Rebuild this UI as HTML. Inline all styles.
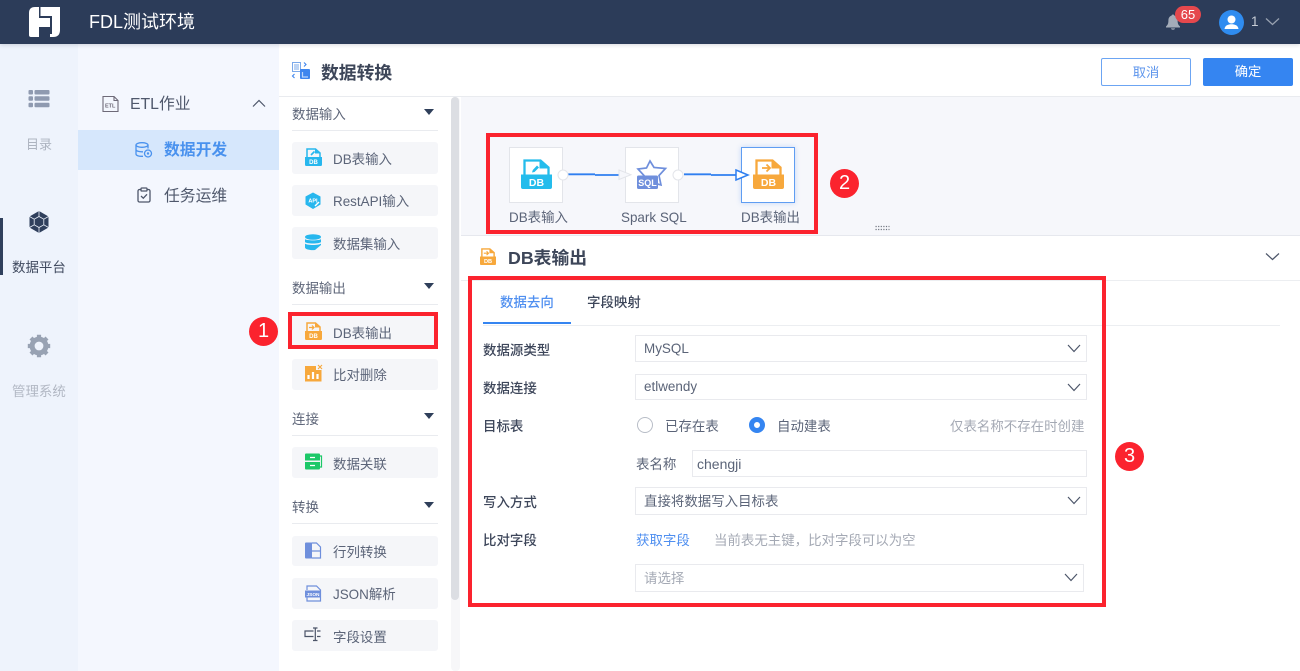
<!DOCTYPE html>
<html lang="zh-CN"><head><meta charset="utf-8"><title>FDL</title>
<style>
html,body{margin:0;padding:0;width:1300px;height:671px;overflow:hidden;background:#fff}
body{position:relative;font-family:"Liberation Sans","Noto Sans CJK SC",sans-serif;color:#4a5369;filter:blur(.3px)}
.a{position:absolute}
.t{position:absolute;white-space:nowrap;line-height:20px;font-size:13.45px}
.card{position:absolute;left:292px;width:146px;background:#f5f6f9;border-radius:3px}
.sec{position:absolute;left:292px;width:146px;height:1px;background:#e9ebef}
.tri{position:absolute;left:424px;width:0;height:0;border-left:5px solid transparent;border-right:5px solid transparent;border-top:6px solid #2f3f5a}
.sel{position:absolute;box-sizing:border-box;background:#fff;border:1px solid #e9eaee}
.red{position:absolute;box-sizing:border-box;border:4px solid #fb232e}
.num{position:absolute;width:29px;height:29px;border-radius:50%;background:#fb232e;color:#fff;text-align:center;line-height:29px;font-size:20px}
.node{position:absolute;top:147px;width:54px;height:56px;box-sizing:border-box;background:#fff;border:1px solid #e3e5ea}
svg{position:absolute;overflow:visible}
.lb{font-weight:500;color:#3d465a}
</style></head><body>

<!-- backgrounds -->
<div class="a" style="left:0;top:44px;width:78px;height:627px;background:#eef3fc"></div>
<div class="a" style="left:78px;top:44px;width:201px;height:627px;background:#f4f7fe"></div>
<div class="a" style="left:0;top:0;width:1300px;height:44px;background:#2c3c59;box-shadow:0 1px 4px rgba(40,50,70,.18)"></div>
<div class="a" style="left:78px;top:130px;width:201px;height:40px;background:#d6e7fc"></div>
<div class="a" style="left:279px;top:96px;width:1021px;height:1px;background:#e9ebef"></div>
<div class="a" style="left:461px;top:97px;width:839px;height:138px;background:#f6f7fb"></div>
<div class="a" style="left:461px;top:235px;width:839px;height:1px;background:#e6e8ee"></div>
<div class="a" style="left:451px;top:97px;width:9px;height:574px;background:#f7f7f9;border-radius:4px"></div>
<div class="a" style="left:451px;top:97px;width:8px;height:503px;background:#dcdee3;border-radius:4px"></div>

<!-- header -->
<svg style="left:29px;top:7px" width="31" height="30" viewBox="0 0 31 30"><path fill="#fff" d="M6 0H31V23Q31 30 24 30H2Q0 30 0 28V6Q0 0 6 0Z"/><g fill="#2c3c59"><rect x="10" y="0" width="1.500" height="10"/><rect x="10" y="9" width="13" height="2"/><rect x="21" y="9" width="2" height="18"/><rect x="10" y="20" width="11" height="10"/></g></svg>
<div class="t" style="left:89px;top:12px;font-size:18px;color:#fff">FDL测试环境</div>
<svg style="left:1165px;top:14px" width="16" height="16" viewBox="0 0 16 16"><path fill="#a4acb9" d="M8 0.500C9 0.500 9.300 1 9.300 1.500C11.500 2.200 12.600 4 12.600 6.500C12.600 9.500 13.300 11 15 12.500V13.500H1V12.500C2.700 11 3.400 9.500 3.400 6.500C3.400 4 4.500 2.200 6.700 1.500C6.700 1 7 0.500 8 0.500ZM6 14.400H10C10 15.300 9 15.800 8 15.800S6 15.300 6 14.400Z"/></svg>
<div class="a" style="left:1175px;top:6px;width:26px;height:17px;background:#e5484d;border-radius:9px;color:#fff;font-size:13px;line-height:17px;text-align:center">65</div>
<div class="a" style="left:1219px;top:10px;width:25px;height:25px;border-radius:50%;background:#2f8cf0"></div>
<svg style="left:1219px;top:10px" width="25" height="25" viewBox="0 0 25 25"><circle cx="12.500" cy="9.500" r="4" fill="#fff"/><path fill="#fff" d="M5.500 19C6 15.500 9 14.300 12.500 14.300S19 15.500 19.500 19Z"/></svg>
<div class="t" style="left:1251px;top:12px;font-size:13.5px;color:#c8cdd6">1</div>
<svg style="left:1265px;top:17px" width="15" height="9" viewBox="0 0 15 9"><path fill="none" stroke="#98a1b0" stroke-width="1.300" d="M1 1.500 7.500 7.500 14 1.500"/></svg>

<!-- left rail -->
<svg style="left:28px;top:89px" width="22" height="19" viewBox="0 0 22 19"><g fill="#8f9ab0"><rect x="0.500" y="1" width="4.500" height="4.500" rx="1"/><rect x="0.500" y="7.300" width="4.500" height="4.500" rx="1"/><rect x="0.500" y="13.800" width="4.500" height="4.500" rx="1"/><rect x="6.500" y="1" width="15" height="4.500" rx="1"/><rect x="6.500" y="7.300" width="15" height="4.500" rx="1"/><rect x="6.500" y="13.800" width="15" height="4.500" rx="1"/></g></svg>
<div class="t" style="left:26px;top:135px;font-size:13px;color:#adb4c0">目录</div>
<div class="a" style="left:0;top:218px;width:3px;height:57px;background:#2f3f5c"></div>
<svg style="left:29px;top:211px" width="20" height="22" viewBox="0 0 20 22"><path fill="#2f3f5c" d="M10 0 19.500 5.500V16.500L10 22 .5 16.500V5.500Z"/><g fill="none" stroke="#eef3fc" stroke-width=".8"><path d="M10 5.500 14.800 8.200V13.800L10 16.500 5.200 13.800V8.200Z"/><path d="M10 0V5.500M19.500 5.500 14.800 8.200M19.500 16.500 14.800 13.800M10 22V16.500M.5 16.500 5.200 13.800M.5 5.500 5.200 8.200"/></g></svg>
<div class="t" style="left:12px;top:258px;color:#414b60">数据平台</div>
<svg style="left:27px;top:334px" width="24" height="24" viewBox="0 0 24 24"><circle cx="12" cy="12" r="6.900" fill="none" stroke="#98a2b3" stroke-width="5"/><g stroke="#98a2b3" stroke-width="4.200"><path d="M12 .8V4M12 20V23.200M.8 12H4M20 12H23.200M4 4 6.300 6.300M17.700 17.700 20 20M4 20 6.300 17.700M17.700 6.300 20 4"/></g></svg>
<div class="t" style="left:12px;top:382px;color:#b2b8c4">管理系统</div>

<!-- second menu -->
<svg style="left:102px;top:96px" width="17" height="16" viewBox="0 0 17 16"><path fill="none" stroke="#6e6a78" stroke-width="1.100" d="M1 .5H12L16 4.500V15.500H1ZM12 .5V4.500H16"/><text x="3" y="11.500" font-size="5.500" fill="#6e6a78" font-family="Liberation Sans" font-weight="700">ETL</text></svg>
<div class="t" style="left:130px;top:95px;font-size:15.8px;color:#4f586c">ETL作业</div>
<svg style="left:252px;top:99px" width="14" height="9" viewBox="0 0 14 9"><path fill="none" stroke="#4d566a" stroke-width="1.200" d="M1 7.500 7 1.500 13 7.500"/></svg>
<svg style="left:135px;top:142px" width="18" height="16" viewBox="0 0 18 16"><g fill="none" stroke="#4a92ee" stroke-width="1.300"><ellipse cx="7" cy="3" rx="6" ry="2.300"/><path d="M1 3V12C1 13.600 4 14.500 8 14.300M1 7.500C1 9 4 10 8 9.800M13 3V6.500"/><circle cx="13" cy="11.500" r="3.500"/></g><circle cx="13" cy="11.500" r="1.200" fill="#4a92ee"/></svg>
<div class="t" style="left:164px;top:141px;font-size:15.8px;font-weight:700;color:#4a92ee">数据开发</div>
<svg style="left:137px;top:187px" width="14" height="16" viewBox="0 0 14 16"><g fill="none" stroke="#4d566a" stroke-width="1.300"><rect x="1" y="2.500" width="12" height="12.500" rx="1.500"/><rect x="4" y="1" width="6" height="3" rx=".8" fill="#f4f7fe"/><path d="M4 9 6.300 11.200 10 7.300"/></g></svg>
<div class="t" style="left:164px;top:187px;font-size:15.8px;color:#4f586c">任务运维</div>

<!-- top bar -->
<svg style="left:292px;top:62px" width="18" height="18" viewBox="0 0 18 18"><rect x="0.500" y="0.500" width="8" height="9" fill="none" stroke="#7ba9ea" stroke-width="1"/><path d="M2 3H7M2 5H7M2 7H7" stroke="#7ba9ea" stroke-width=".9"/><rect x="8" y="7" width="10" height="10" rx="1" fill="#3f86ee"/><path d="M10.500 10V15H16" fill="none" stroke="#bcd6fa" stroke-width="1.200"/><path d="M12 0.500 14 2.500 12 4.500M2.500 12 .5 14 2.500 16" fill="none" stroke="#3f86ee" stroke-width="1.100"/></svg>
<div class="t" style="left:321px;top:63px;font-size:17.8px;font-weight:700;color:#3d4659">数据转换</div>
<div class="a" style="left:1101px;top:58px;width:90px;height:28px;box-sizing:border-box;border:1px solid #6ca5f3;border-radius:2px;background:#fff;color:#5d95ec;font-size:13.3px;line-height:27px;text-align:center">取消</div>
<div class="a" style="left:1203px;top:58px;width:90px;height:28px;border-radius:2px;background:#3585f1;color:#fff;font-size:13.3px;line-height:28px;text-align:center">确定</div>

<!-- palette -->
<div class="t" style="left:292px;top:105px;color:#5d6578">数据输入</div><div class="tri" style="top:109px"></div><div class="sec" style="top:130px"></div>
<div class="t" style="left:292px;top:279px;color:#5d6578">数据输出</div><div class="tri" style="top:283px"></div><div class="sec" style="top:304px"></div>
<div class="t" style="left:292px;top:410px;color:#5d6578">连接</div><div class="tri" style="top:413px"></div><div class="sec" style="top:435px"></div>
<div class="t" style="left:292px;top:498px;color:#5d6578">转换</div><div class="tri" style="top:502px"></div><div class="sec" style="top:523px"></div>

<div class="card" style="top:142px;height:32px"></div>
<div class="card" style="top:185px;height:31px"></div>
<div class="card" style="top:227px;height:32px"></div>
<div class="card" style="top:315px;height:31px"></div>
<div class="card" style="top:359px;height:31px"></div>
<div class="card" style="top:447px;height:31px"></div>
<div class="card" style="top:536px;height:30px"></div>
<div class="card" style="top:578px;height:31px"></div>
<div class="card" style="top:620px;height:31px"></div>

<svg style="left:305px;top:148px" width="17" height="18" viewBox="0 0 17 18"><path fill="none" stroke="#27b7ee" stroke-width="1.500" d="M2 9V1H10.500L15 5V9"/><path fill="#27b7ee" d="M10 1 15 5.500H10ZM0 9H17V16.800Q17 18 16 18H1Q0 18 0 16.800Z"/><path d="M6 7 9.500 3.500" stroke="#27b7ee" stroke-width="1.600"/><text x="8.500" y="16" text-anchor="middle" font-size="6" font-weight="700" fill="#fff" font-family="Liberation Sans">DB</text></svg>
<div class="t" style="left:333px;top:150px;color:#5b6478">DB表输入</div>
<svg style="left:305px;top:192px" width="17" height="18" viewBox="0 0 17 18"><path fill="#27b7ee" d="M8 0.500 15.500 4.500V12.500L8 17 .5 12.500V4.500Z"/><text x="8" y="10.500" text-anchor="middle" font-size="5.500" font-weight="700" fill="#fff" font-family="Liberation Sans">API</text><path d="M10 14 14 10" stroke="#fff" stroke-width="1.400"/></svg>
<div class="t" style="left:333px;top:192px;color:#5b6478">RestAPI输入</div>
<svg style="left:304px;top:234px" width="18" height="18" viewBox="0 0 18 18"><g fill="#27b7ee"><ellipse cx="9" cy="3" rx="8" ry="2.800"/><path d="M1 5C2 6.800 16 6.800 17 5V8C16 10 2 10 1 8Z"/><path d="M1 9.500C2 11.500 16 11.500 17 9.500V11L11 16C6 16.500 1 15.300 1 13.500Z"/></g></svg>
<div class="t" style="left:333px;top:235px;color:#5b6478">数据集输入</div>
<svg style="left:305px;top:322px" width="17" height="18" viewBox="0 0 17 18"><path fill="none" stroke="#f7a83c" stroke-width="1.500" d="M2 9V1H10.500L15 5V9"/><path fill="#f7a83c" d="M10 1 15 5.500H10ZM0 9H17V16.800Q17 18 16 18H1Q0 18 0 16.800Z"/><path fill="none" stroke="#f7a83c" stroke-width="1.200" d="M4 5.500H9M7 3.500 9 5.500 7 7.500"/><text x="8.500" y="16" text-anchor="middle" font-size="6" font-weight="700" fill="#fff" font-family="Liberation Sans">DB</text></svg>
<div class="t" style="left:333px;top:324px;color:#5b6478">DB表输出</div>
<svg style="left:305px;top:364px" width="18" height="18" viewBox="0 0 18 18"><path fill="#f7a83c" d="M0 2H11V6H16.500V17.500H0Z"/><path d="M3.500 15V11M8 15V8M12.500 15V10" stroke="#fff" stroke-width="2.200"/><path d="M13 1 17 5M17 1 13 5" stroke="#f7a83c" stroke-width="1.100"/></svg>
<div class="t" style="left:333px;top:366px;color:#5b6478">比对删除</div>
<svg style="left:305px;top:453px" width="17" height="17" viewBox="0 0 17 17"><path fill="#1cc868" d="M1 0.500H14Q15 0.500 15 1.500V7.500H0V1.500Q0 .5 1 .5ZM0 9H15V15Q15 16.500 14 16.500H1Q0 16.500 0 15.500Z"/><path stroke="#fff" stroke-width="1.200" d="M5 4.500H10M5 12.500H10"/><path fill="none" stroke="#1cc868" stroke-width="1.200" d="M15 3H16.500V14H15"/></svg>
<div class="t" style="left:333px;top:455px;color:#5b6478">数据关联</div>
<svg style="left:305px;top:542px" width="17" height="17" viewBox="0 0 17 17"><path fill="#6f8fdc" d="M1 0.500H7V16.500H1Q0 16.500 0 15.500V1.500Q0 .5 1 .5Z"/><path fill="none" stroke="#6f8fdc" stroke-width="1.200" d="M7 1H11.500L15.500 5V16H7M7 9H15.500"/></svg>
<div class="t" style="left:333px;top:543px;color:#5b6478">行列转换</div>
<svg style="left:305px;top:585px" width="17" height="17" viewBox="0 0 17 17"><path fill="none" stroke="#6f8fdc" stroke-width="1.200" d="M2 5V1H11.500L15.500 5V16H2V12"/><rect x="0" y="5.500" width="16" height="7" fill="#6f8fdc"/><text x="8" y="11" text-anchor="middle" font-size="4.800" font-weight="700" fill="#fff" font-family="Liberation Sans">JSON</text></svg>
<div class="t" style="left:333px;top:585px;color:#5b6478">JSON解析</div>
<svg style="left:304px;top:627px" width="18" height="16" viewBox="0 0 18 16"><g fill="none" stroke="#4b5468" stroke-width="1.200"><path d="M9.500 4H1V9.500H9.500M13 4H16.500M13 9.500H16.500"/><path d="M11.300 1V13.500M9 1H13.500M9 13.500H13.500"/></g></svg>
<div class="t" style="left:333px;top:628px;color:#5b6478">字段设置</div>

<!-- canvas nodes -->
<div class="node" style="left:509px"></div>
<div class="node" style="left:625px"></div>
<div class="node" style="left:741px;border:1px solid #5f9df2;box-shadow:0 0 5px rgba(80,140,240,.3)"></div>
<svg style="left:521px;top:159px" width="31" height="30" viewBox="0 0 31 30"><path fill="none" stroke="#24bcec" stroke-width="2.300" d="M3.500 16V1.500H19.500L27.500 8.500V16"/><path fill="#24bcec" d="M18.500 1 27.500 8.500V9.500H18.500ZM0 15.500H31V28Q31 30 29 30H2Q0 30 0 28Z"/><path d="M11 13.500 11.800 11 16 6.500 18 8.500 13.500 13Z" fill="#24bcec"/><text x="15.500" y="27" text-anchor="middle" font-size="10.500" font-weight="700" fill="#fff" font-family="Liberation Sans">DB</text></svg>
<svg style="left:637px;top:160px" width="30" height="29" viewBox="0 0 30 29"><path fill="none" stroke="#6f8fdc" stroke-width="1.700" d="M13 1 17 7.500 28.500 8.500 22 15.500 24 25 13 22 6 24 7 15.500 1 9 9.500 8Z"/><rect x="0" y="15.500" width="21" height="13.500" rx="1.500" fill="#6f8fdc"/><text x="10.500" y="25.800" text-anchor="middle" font-size="9" font-weight="700" fill="#fff" font-family="Liberation Sans">SQL</text></svg>
<svg style="left:753px;top:159px" width="31" height="30" viewBox="0 0 31 30"><path fill="none" stroke="#f7a83c" stroke-width="2.300" d="M3.500 16V1.500H19.500L27.500 8.500V16"/><path fill="#f7a83c" d="M18.500 1 27.500 8.500V9.500H18.500ZM0 15.500H31V28Q31 30 29 30H2Q0 30 0 28Z"/><path fill="none" stroke="#f7a83c" stroke-width="1.800" d="M9 9H16.500M13.500 5.500 17 9 13.500 12.500"/><text x="15.500" y="27" text-anchor="middle" font-size="10.500" font-weight="700" fill="#fff" font-family="Liberation Sans">DB</text></svg>
<svg style="left:555px;top:165px" width="200" height="20" viewBox="0 0 200 20"><path fill="none" stroke="#2f7ff0" stroke-width="1.800" d="M13 9.300H40M40 10H64M129 9.300H156M156 10H181"/><path fill="#f6f7fb" stroke="#e3e5ea" d="M64 5 76 9.700 64 14.500Z"/><path fill="#fff" stroke="#2f7ff0" stroke-width="1.500" d="M181 5 193 10 181 15Z"/><circle cx="8" cy="10" r="5" fill="#fff" stroke="#e3e5ea"/><circle cx="123" cy="10" r="5" fill="#fff" stroke="#e3e5ea"/></svg>
<div class="t" style="left:509px;top:208px;color:#5b6478">DB表输入</div>
<div class="t" style="left:621px;top:208px;color:#5b6478">Spark SQL</div>
<div class="t" style="left:741px;top:208px;color:#5b6478">DB表输出</div>
<svg style="left:875px;top:225px" width="15" height="6" viewBox="0 0 15 6"><path stroke="#70757f" stroke-width="1.200" stroke-dasharray="1.200 1.400" d="M0.500 1.500H14.500M0.500 4.500H14.500"/></svg>

<!-- panel -->
<svg style="left:480px;top:248px" width="16" height="17" viewBox="0 0 17 18"><path fill="none" stroke="#f7a83c" stroke-width="1.500" d="M2 9V1H10.500L15 5V9"/><path fill="#f7a83c" d="M10 1 15 5.500H10ZM0 9H17V16.800Q17 18 16 18H1Q0 18 0 16.800Z"/><path fill="none" stroke="#f7a83c" stroke-width="1.200" d="M4 5.500H9M7 3.500 9 5.500 7 7.500"/><text x="8.500" y="16" text-anchor="middle" font-size="6" font-weight="700" fill="#fff" font-family="Liberation Sans">DB</text></svg>
<div class="t" style="left:508px;top:248px;font-size:17.8px;font-weight:700;color:#3d4659">DB表输出</div>
<svg style="left:1265px;top:252px" width="15" height="9" viewBox="0 0 15 9"><path fill="none" stroke="#4d566a" stroke-width="1.200" d="M1 1.500 7.500 7.500 14 1.500"/></svg>
<div class="a" style="left:461px;top:280px;width:839px;height:1px;background:#eceef1"></div>

<div class="t" style="left:500px;top:293px;font-weight:500;color:#4f8ff0">数据去向</div>
<div class="t" style="left:587px;top:293px;font-weight:500;color:#3d465a">字段映射</div>
<div class="a" style="left:483px;top:325px;width:797px;height:1px;background:#eceef1"></div>
<div class="a" style="left:483px;top:322px;width:88px;height:2px;background:#3585f1"></div>

<div class="t lb" style="left:483px;top:341px">数据源类型</div>
<div class="t lb" style="left:483px;top:379px">数据连接</div>
<div class="t lb" style="left:483px;top:417px">目标表</div>
<div class="t lb" style="left:483px;top:493px">写入方式</div>
<div class="t lb" style="left:483px;top:531px">比对字段</div>

<div class="sel" style="left:635px;top:335px;width:452px;height:27px"></div>
<div class="t" style="left:644px;top:339px;color:#5b6478">MySQL</div>
<div class="sel" style="left:635px;top:374px;width:452px;height:26px"></div>
<div class="t" style="left:644px;top:377px;color:#5b6478">etlwendy</div>

<div class="a" style="left:637px;top:417px;width:14px;height:14px;border:1px solid #b8bdc7;border-radius:50%;background:#fff"></div>
<div class="t" style="left:665px;top:417px;color:#5b6478">已存在表</div>
<div class="a" style="left:749px;top:417px;width:6px;height:6px;border:5px solid #3585f1;border-radius:50%;background:#fff"></div>
<div class="t" style="left:777px;top:417px;color:#5b6478">自动建表</div>
<div class="t" style="left:950px;top:417px;color:#a4a9b4">仅表名称不存在时创建</div>

<div class="t" style="left:636px;top:455px;color:#5b6478">表名称</div>
<div class="sel" style="left:692px;top:450px;width:395px;height:27px"></div>
<div class="t" style="left:697px;top:454px;color:#5b6478;font-size:14px">chengji</div>

<div class="sel" style="left:635px;top:487px;width:452px;height:28px"></div>
<div class="t" style="left:644px;top:492px;color:#5b6478">直接将数据写入目标表</div>

<div class="t" style="left:636px;top:531px;color:#4f8ff0">获取字段</div>
<div class="t" style="left:714px;top:531px;color:#a4a9b4">当前表无主键，比对字段可以为空</div>

<div class="sel" style="left:635px;top:564px;width:449px;height:28px"></div>
<div class="t" style="left:644px;top:569px;color:#a4a9b4">请选择</div>

<svg style="left:1067px;top:344px" width="14" height="9" viewBox="0 0 14 9"><path fill="none" stroke="#4d566a" stroke-width="1.200" d="M1 1 7 7.500 13 1"/></svg>
<svg style="left:1067px;top:383px" width="14" height="9" viewBox="0 0 14 9"><path fill="none" stroke="#4d566a" stroke-width="1.200" d="M1 1 7 7.500 13 1"/></svg>
<svg style="left:1067px;top:496px" width="14" height="9" viewBox="0 0 14 9"><path fill="none" stroke="#4d566a" stroke-width="1.200" d="M1 1 7 7.500 13 1"/></svg>
<svg style="left:1064px;top:573px" width="14" height="9" viewBox="0 0 14 9"><path fill="none" stroke="#4d566a" stroke-width="1.200" d="M1 1 7 7.500 13 1"/></svg>

<!-- red annotations -->
<div class="red" style="left:288px;top:312px;width:150px;height:37px"></div>
<div class="red" style="left:486px;top:133px;width:332px;height:101px"></div>
<div class="red" style="left:468px;top:276px;width:638px;height:331px"></div>
<div class="num" style="left:249px;top:317px">1</div>
<div class="num" style="left:830px;top:169px">2</div>
<div class="num" style="left:1115px;top:442px">3</div>
</body></html>
